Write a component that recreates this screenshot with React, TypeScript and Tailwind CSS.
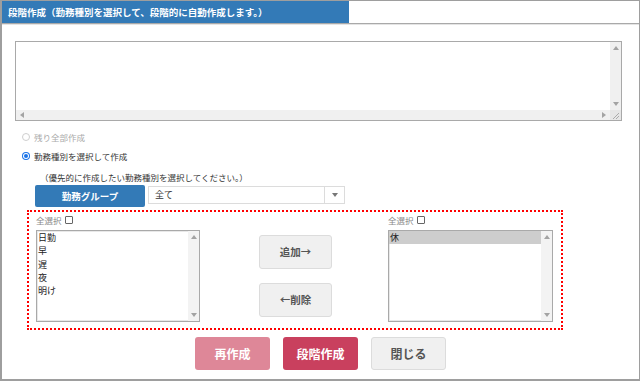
import React from "react";

const FONT = { fontFamily: '"Noto Sans CJK JP", "Noto Sans", sans-serif' };

const leftItems = ["日勤", "早", "遅", "夜", "明け"];
const rightItems = ["休"];

// tiny scrollbar arrow
const Tri: React.FC<{ dir: "up" | "down" | "left" | "right"; color?: string }> = ({ dir, color = "#a3a3a3" }) => {
  const pts = {
    up: "0,4 3,0 6,4",
    down: "0,0 6,0 3,4",
    left: "4,0 4,6 0,3",
    right: "0,0 0,6 4,3",
  }[dir];
  const vertical = dir === "up" || dir === "down";
  return (
    <svg width={vertical ? 6 : 4} height={vertical ? 4 : 6} viewBox={vertical ? "0 0 6 4" : "0 0 4 6"}>
      <polygon points={pts} fill={color} />
    </svg>
  );
};

const ListBox: React.FC<{ items: string[]; selected?: number }> = ({ items, selected }) => (
  <div className="flex h-[92px] border border-[#a9a9a9] bg-white shadow-[inset_0_0_0_1px_#e8e8e8]">
    <ul className="flex-1 text-[9px] leading-[13.25px] text-[#222]">
      {items.map((it, i) => (
        <li key={i} className={`pl-px ${i === selected ? "bg-[#cdcdcd]" : ""}`}>
          {it}
        </li>
      ))}
    </ul>
    <div className="flex w-[11px] flex-col items-center justify-between bg-[#f3f3f3] py-[4px]">
      <Tri dir="up" />
      <Tri dir="down" />
    </div>
  </div>
);

const SelectAll: React.FC = () => (
  <div className="flex h-[12px] items-center gap-[3px] text-[8.5px] text-[#888]">
    全選択
    <span className="inline-block h-[8px] w-[8px] rounded-[1px] border border-[#666] bg-white" />
  </div>
);

const App: React.FC = () => {
  return (
    <div style={FONT} className="h-[381px] w-[640px] overflow-hidden border-t border-r border-b-2 border-l-2 border-[#9e9e9e] bg-white text-[#333]">
      {/* header */}
      <div className="flex border-b border-[#a9a9a9]">
        <div className="flex h-[22px] w-[347px] items-center bg-[#337ab7] pl-[6px] text-[9.5px] font-bold text-white">
          段階作成（勤務種別を選択して、段階的に自動作成します。）
        </div>
      </div>
      <div className="h-px bg-[#e4e4e4]" />

      {/* textarea */}
      <div className="ml-[13px] mt-[16px] flex h-[80px] w-[607px] flex-col border border-[#a9a9a9] bg-white">
        <div className="flex flex-1">
          <div className="flex-1" />
          <div className="flex w-[11px] flex-col items-center justify-between bg-[#f0f0f0] py-[4px]">
            <Tri dir="up" />
            <Tri dir="down" />
          </div>
        </div>
        <div className="flex h-[10px]">
          <div className="flex flex-1 items-center justify-between bg-[#f0f0f0] px-[4px]">
            <Tri dir="left" />
            <Tri dir="right" />
          </div>
          <div className="relative w-[11px] bg-[#e6e6e6]">
            <svg width="11" height="10" viewBox="0 0 11 10" className="absolute inset-0">
              <line x1="9" y1="3" x2="3" y2="9" stroke="#9a9a9a" strokeWidth="0.8" />
              <line x1="9" y1="6" x2="6" y2="9" stroke="#9a9a9a" strokeWidth="0.8" />
            </svg>
          </div>
        </div>
      </div>

      {/* radios */}
      <div className="ml-[20px] mt-[9px] flex h-[14px] items-center gap-[4px] text-[8.5px] text-[#aaa]">
        <span className="inline-block h-[8px] w-[8px] rounded-full border border-[#cfcfcf] bg-white" />
        残り全部作成
      </div>
      <div className="ml-[20px] mt-[5px] flex h-[14px] items-center gap-[4px] text-[8.5px] text-[#333]">
        <span className="flex h-[8px] w-[8px] items-center justify-center rounded-full bg-[#1a73e8]">
          <span className="flex h-[6px] w-[6px] items-center justify-center rounded-full bg-white">
            <span className="h-[4px] w-[4px] rounded-full bg-[#1a73e8]" />
          </span>
        </span>
        勤務種別を選択して作成
      </div>
      <div className="ml-[38px] mt-[8px] flex h-[12px] items-center text-[8.5px] text-[#333]">
        （優先的に作成したい勤務種別を選択してください。）
      </div>

      {/* group select */}
      <div className="ml-[33px] mt-[2px] flex items-start gap-[3px]">
        <button className="flex h-[22px] w-[110px] items-center justify-center rounded-[2px] bg-[#337ab7] text-[9.5px] font-bold text-white">
          勤務グループ
        </button>
        <div className="mt-px flex h-[18px] w-[197px] items-center border border-[#dcdcdc] bg-white">
          <span className="flex-1 pl-[6px] text-[9px] text-[#333]">全て</span>
          <span className="flex h-full w-[20px] items-center justify-center border-l border-[#dcdcdc]">
            <Tri dir="down" color="#777" />
          </span>
        </div>
      </div>

      {/* dotted selection area */}
      <div className="ml-[25px] mt-[3px] flex h-[120px] w-[536px] border-2 border-dotted border-[#ff0000] pl-[7px] pt-[2px]">
        <div className="flex w-[164px] flex-col gap-[4px]">
          <SelectAll />
          <ListBox items={leftItems} />
        </div>
        <div className="ml-[59px] mt-[21px] flex w-[73px] flex-col gap-[14px]">
          <button className="h-[34px] rounded-[3px] border border-[#dcdcdc] bg-[#f0f0f0] text-[10.5px] font-bold text-[#555]">
            追加→
          </button>
          <button className="h-[34px] rounded-[3px] border border-[#dcdcdc] bg-[#f0f0f0] text-[10.5px] font-bold text-[#555]">
            ←削除
          </button>
        </div>
        <div className="ml-[56px] flex w-[165px] flex-col gap-[4px]">
          <SelectAll />
          <ListBox items={rightItems} selected={0} />
        </div>
      </div>

      {/* footer buttons */}
      <div className="mt-[7px] flex justify-center gap-[13px]">
        <button className="h-[33px] w-[75px] rounded-[3px] bg-[#de8798] text-[12px] font-bold text-white">
          再作成
        </button>
        <button className="h-[33px] w-[75px] rounded-[3px] bg-[#c9405e] text-[12px] font-bold text-white">
          段階作成
        </button>
        <button className="h-[33px] w-[75px] rounded-[3px] border border-[#dcdcdc] bg-[#f0f0f0] text-[12px] font-bold text-[#555]">
          閉じる
        </button>
      </div>
    </div>
  );
};

export default App;
